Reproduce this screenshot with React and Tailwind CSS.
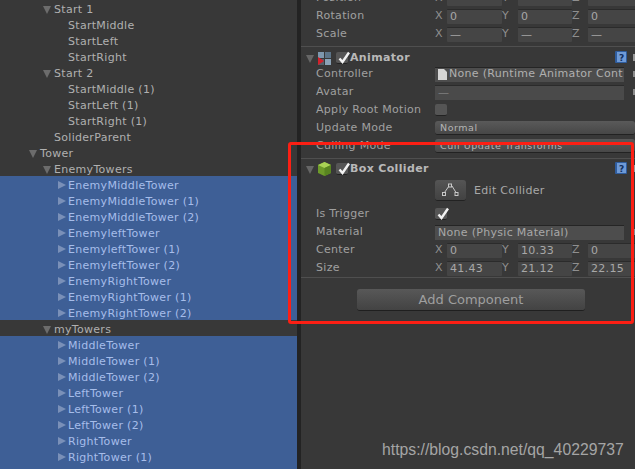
const tree = [
  { name: 'Start 1', indent: 54, arrow: 'down' },
  { name: 'StartMiddle', indent: 68 },
  { name: 'StartLeft', indent: 68 },
  { name: 'StartRight', indent: 68 },
  { name: 'Start 2', indent: 54, arrow: 'down' },
  { name: 'StartMiddle (1)', indent: 68 },
  { name: 'StartLeft (1)', indent: 68 },
  { name: 'StartRight (1)', indent: 68 },
  { name: 'SoliderParent', indent: 54 },
  { name: 'Tower', indent: 40, arrow: 'down' },
  { name: 'EnemyTowers', indent: 54, arrow: 'down' },
  { name: 'EnemyMiddleTower', indent: 68, arrow: 'right', selected: true },
  { name: 'EnemyMiddleTower (1)', indent: 68, arrow: 'right', selected: true },
  { name: 'EnemyMiddleTower (2)', indent: 68, arrow: 'right', selected: true },
  { name: 'EnemyleftTower', indent: 68, arrow: 'right', selected: true },
  { name: 'EnemyleftTower (1)', indent: 68, arrow: 'right', selected: true },
  { name: 'EnemyleftTower (2)', indent: 68, arrow: 'right', selected: true },
  { name: 'EnemyRightTower', indent: 68, arrow: 'right', selected: true },
  { name: 'EnemyRightTower (1)', indent: 68, arrow: 'right', selected: true },
  { name: 'EnemyRightTower (2)', indent: 68, arrow: 'right', selected: true },
  { name: 'myTowers', indent: 54, arrow: 'down' },
  { name: 'MiddleTower', indent: 68, arrow: 'right', selected: true },
  { name: 'MiddleTower (1)', indent: 68, arrow: 'right', selected: true },
  { name: 'MiddleTower (2)', indent: 68, arrow: 'right', selected: true },
  { name: 'LeftTower', indent: 68, arrow: 'right', selected: true },
  { name: 'LeftTower (1)', indent: 68, arrow: 'right', selected: true },
  { name: 'LeftTower (2)', indent: 68, arrow: 'right', selected: true },
  { name: 'RightTower', indent: 68, arrow: 'right', selected: true },
  { name: 'RightTower (1)', indent: 68, arrow: 'right', selected: true },
  { name: 'RightTower (2)', indent: 68, arrow: 'right', selected: true },
];

const Arrow = ({ dir, color }) => (
  <svg width="9" height="9" viewBox="0 0 9 9" className="shrink-0">
    {dir === 'down' ? <path d="M0 1h8L4 9z" fill={color} /> : <path d="M1 0l8 4-8 4z" fill={color} />}
  </svg>
);

const TreeRow = ({ row }) => (
  <div className={`relative h-4 flex items-center ${row.selected ? 'bg-[#3e5f96] text-[#a6bdea]' : 'text-[#b0b0b0]'}`}>
    {row.arrow && (
      <span className="absolute top-[5px]" style={{ left: row.indent - 11 }}>
        <Arrow dir={row.arrow} color={row.selected ? '#7a90b8' : '#6c6c6c'} />
      </span>
    )}
    <span className="whitespace-nowrap pt-[4px]" style={{ marginLeft: row.indent }}>{row.name}</span>
  </div>
);

const Field = ({ axis, value, labelW, w }) => (
  <>
    <span className={`${labelW} text-[#8f8f8f] shrink-0`}>{axis}</span>
    <div className={`${w} h-[15px] bg-[#454545] border-t border-[#2b2b2b] rounded-[1px] text-[#a8a8a8] pl-[3px] leading-[14px] shrink-0 whitespace-nowrap`}>{value}</div>
  </>
);

const VectorRow = ({ label, x, y, z }) => (
  <div className="h-[18px] flex items-center">
    <span className="w-[134px] pl-[15px] text-[#a0a0a0] shrink-0">{label}</span>
    <div className="flex items-center">
      <Field axis="X" value={x} labelW="w-[12px]" w="w-[55px]" />
      <Field axis="Y" value={y} labelW="w-[16px]" w="w-[54px]" />
      <Field axis="Z" value={z} labelW="w-[16px]" w="w-[60px]" />
    </div>
  </div>
);

const Check = () => (
  <svg width="14" height="14" viewBox="0 0 14 14" className="absolute -top-[1px] left-[1px]">
    <path d="M2.5 7.5l3 3.5L12 1.5" fill="none" stroke="#f2f2f2" strokeWidth="2.4" />
  </svg>
);

const CheckBox = ({ checked }) => (
  <div className="relative w-[12px] h-[12px] bg-[#555555] rounded-[2px] border-b border-[#222222] shrink-0">
    {checked && <Check />}
  </div>
);

const HelpBook = () => (
  <svg width="12" height="12" viewBox="0 0 12 12" className="shrink-0">
    <rect x="0" y="0" width="12" height="12" rx="1" fill="#2f5d9e" />
    <rect x="2" y="1" width="9" height="10" fill="#6f9ad6" />
    <text x="4" y="9.5" fontSize="9" fontWeight="bold" fill="#12305e" fontFamily="DejaVu Sans">?</text>
  </svg>
);

const ComponentHeader = ({ icon, title }) => (
  <div className="relative h-[18px] flex items-center font-bold text-[#b8b8b8] tracking-[0.35px]">
    <span className="ml-[5px] mr-[3px]"><Arrow dir="down" color="#666666" /></span>
    {icon}
    <span className="ml-[5px]"><CheckBox checked /></span>
    <span className="ml-[2px]">{title}</span>
    <span className="absolute left-[314px] top-[2px]"><HelpBook /></span>
    <span className="absolute left-[332px] top-[5px] w-[2px] h-[7px] bg-[#999999]"></span>
  </div>
);

const AnimatorIcon = () => (
  <svg width="13" height="13" viewBox="0 0 13 13" className="shrink-0">
    <rect x="0" y="0" width="6" height="6" fill="#7d97ad" />
    <rect x="7" y="0" width="6" height="6" fill="#5c7488" />
    <rect x="7" y="7" width="6" height="6" fill="#8aa2b6" />
    <rect x="0" y="7" width="6" height="6" fill="#55606a" />
    <path d="M0 5l6 4-6 4z" fill="#d3202a" />
  </svg>
);

const CubeIcon = () => (
  <svg width="13" height="14" viewBox="0 0 13 14" className="shrink-0">
    <path d="M6.5 0L13 3v8l-6.5 3L0 11V3z" fill="#6d9a2a" />
    <path d="M6.5 0L13 3 6.5 6 0 3z" fill="#a9d255" />
    <path d="M6.5 6L13 3v8l-6.5 3z" fill="#588420" />
  </svg>
);

const Separator = () => <div className="h-[1px] bg-[#4f4f4f]"></div>;

const PropRow = ({ label, children }) => (
  <div className="relative h-[18px] flex items-center">
    <span className="w-[134px] pl-[15px] text-[#a0a0a0] shrink-0 whitespace-nowrap">{label}</span>
    {children}
  </div>
);

const Dot = () => <span className="absolute left-[332px] top-[6px] w-[2px] h-[6px] bg-[#8a8a8a]"></span>;

const Dropdown = ({ value }) => (
  <div className="w-[210px] h-[14px] bg-gradient-to-b from-[#5a5a5a] to-[#474747] rounded-[3px] border-b border-[#222222] text-[#b4b4b4] text-[9.5px] pl-[5px] leading-[13px] tracking-[0.55px] whitespace-nowrap">{value}</div>
);

const App = () => {
  return (
    <div className="relative w-[635px] h-[469px] overflow-hidden flex bg-[#383838] text-[11px] tracking-[0.3px] font-['DejaVu_Sans',sans-serif]">
      <div className="w-[297px] shrink-0 overflow-hidden">
        {tree.map((row) => (
          <TreeRow key={row.name} row={row} />
        ))}
      </div>
      <div className="w-[4px] shrink-0 bg-[#232323]"></div>
      <div className="flex-1 min-w-0 overflow-hidden">
        <div className="-mt-[11px] mb-[3px]">
          <VectorRow label="Position" x="" y="" z="" />
          <VectorRow label="Rotation" x="0" y="0" z="0" />
          <VectorRow label="Scale" x="—" y="—" z="—" />
        </div>
        <Separator />
        <div className="h-[2px]"></div>
        <ComponentHeader icon={<AnimatorIcon />} title="Animator" />
        <div className="-mt-[2px]">
          <PropRow label="Controller">
            <div className="w-[189px] h-[15px] bg-[#4d4d4d] border-t border-[#252525] text-[#b0b0b0] flex items-center overflow-hidden whitespace-nowrap pl-[3px]">
              <svg width="9" height="11" viewBox="0 0 9 11" className="shrink-0 mr-[2px]"><path d="M0 0h6l3 3v8H0z" fill="#d6d6d6" /></svg>
              None (Runtime Animator Cont
            </div>
            <Dot />
          </PropRow>
          <PropRow label="Avatar">
            <div className="w-[189px] h-[15px] bg-[#4a4a4a] border-t border-[#2b2b2b] text-[#808080] pl-[3px] leading-[14px]">—</div>
            <Dot />
          </PropRow>
          <PropRow label="Apply Root Motion"><CheckBox /></PropRow>
          <PropRow label="Update Mode"><Dropdown value="Normal" /></PropRow>
          <PropRow label="Culling Mode"><Dropdown value="Cull Update Transforms" /></PropRow>
        </div>
        <div className="h-[3px]"></div>
        <Separator />
        <div className="h-[1px]"></div>
        <ComponentHeader icon={<CubeIcon />} title="Box Collider" />
        <div className="h-[2px]"></div>
        <div className="flex items-center h-[21px] ml-[134px]">
          <div className="w-[31px] h-[21px] flex items-center justify-center rounded-[3px] bg-gradient-to-b from-[#555555] to-[#424242] border-b border-[#222222]">
            <svg width="17" height="14" viewBox="0 0 17 14" fill="none" stroke="#c8c8c8" strokeWidth="1">
              <path d="M2.5 9.5L7 3M10 3l4 6.5" />
              <rect x="6.5" y="1" width="3" height="3" />
              <rect x="0.5" y="9.5" width="3" height="3" />
              <rect x="13" y="9.5" width="3" height="3" />
            </svg>
          </div>
          <span className="ml-[8px] pt-[1px] text-[#a8a8a8]">Edit Collider</span>
        </div>
        <div className="h-[4px]"></div>
        <PropRow label="Is Trigger"><CheckBox checked /></PropRow>
        <PropRow label="Material">
          <div className="w-[189px] h-[15px] bg-[#4d4d4d] border-t border-[#252525] text-[#a8a8a8] pl-[3px] leading-[14px] whitespace-nowrap">None (Physic Material)</div>
          <Dot />
        </PropRow>
        <VectorRow label="Center" x="0" y="10.33" z="0" />
        <VectorRow label="Size" x="41.43" y="21.12" z="22.15" />
        <Separator />
        <div className="flex justify-center mt-[11px] pl-[6px]">
          <div className="w-[228px] h-[22px] flex items-center justify-center rounded-[3px] bg-gradient-to-b from-[#585858] to-[#434343] border-b border-[#1f1f1f] text-[#9f9f9f] text-[13px] tracking-normal">Add Component</div>
        </div>
      </div>
      <div className="absolute left-[288px] top-[142px] w-[346px] h-[182px] border-[3px] border-[#fc1f14] rounded-[3px]"></div>
      <div className="absolute left-[382px] top-[438px] text-[15.75px] tracking-normal text-[#a5a5a5] font-['Liberation_Sans',sans-serif] whitespace-nowrap">https://blog.csdn.net/qq_40229737</div>
    </div>
  );
};

export default App;
